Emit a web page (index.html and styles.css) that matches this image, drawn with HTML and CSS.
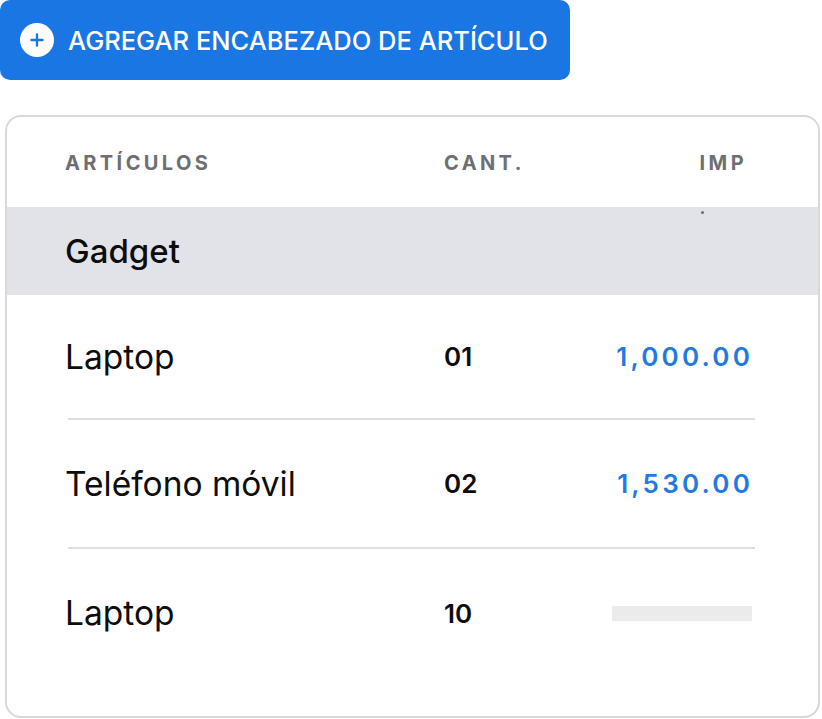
FILE: index.html
```html
<!DOCTYPE html>
<html lang="es">
<head>
    <meta charset="UTF-8">
    <meta name="viewport" content="width=device-width, initial-scale=1.0">
    <title>Artículos</title>
    <link rel="stylesheet" href="styles.css">
</head>
<body>
    <button class="add-btn">
        <span class="plus-icon">
            <svg width="14" height="14" viewBox="0 0 14 14">
                <path d="M7 1.5v11M1.5 7h11" stroke="#1a76e3" stroke-width="2.4" stroke-linecap="round"/>
            </svg>
        </span>
        AGREGAR ENCABEZADO DE ARTÍCULO
    </button>

    <div class="items-card">
        <div class="items-head">
            <span>ARTÍCULOS</span>
            <span>CANT.</span>
            <span class="col-amount">IMP</span>
        </div>

        <div class="group-row">
            <span>Gadget</span>
            <span class="dot"></span>
        </div>

        <!-- filas de artículos -->
        <div class="item-row row-1">
            <span class="item-name">Laptop</span>
            <span class="item-qty">01</span>
            <span class="item-amount">1,000.00</span>
        </div>
        <hr class="divider">
        <div class="item-row row-2">
            <span class="item-name">Teléfono móvil</span>
            <span class="item-qty">02</span>
            <span class="item-amount">1,530.00</span>
        </div>
        <hr class="divider">
        <div class="item-row row-3">
            <span class="item-name">Laptop</span>
            <span class="item-qty">10</span>
            <span class="amount-loading"></span>
        </div>
    </div>
</body>
</html>
```

FILE: styles.css
```css
body {
    font-family: Inter, "Noto Sans", sans-serif;
    background-color: #ffffff;
    margin: 0;
    color: #0d0d0d;
}
.add-btn {
    display: flex;
    align-items: center;
    gap: 14px;
    width: 570px;
    height: 80px;
    padding: 0 0 0 20px;
    border: none;
    border-radius: 10px;
    background-color: #1a76e3;
    color: white;
    font-family: inherit;
    font-size: 25.5px;
    font-weight: 500;
    cursor: pointer;
}
.plus-icon {
    display: flex;
    justify-content: center;
    align-items: center;
    width: 34px;
    height: 34px;
    border-radius: 50%;
    background: white;
}
.items-card {
    margin: 35px 2px 0 5px;
    height: 599px;
    border: 2px solid #d9d9d9;
    border-radius: 16px;
    overflow: hidden;
}
.items-head, .group-row, .item-row {
    display: grid;
    grid-template-columns: 379px 1fr auto;
    align-items: center;
    padding: 0 68px 0 58px;
}
.items-head {
    height: 90px;
    padding-top: 2px;
    box-sizing: border-box;
    color: #6d6f73;
    font-size: 20px;
    font-weight: 700;
    letter-spacing: 3.4px;
}
.items-head .col-amount {
    margin-right: 3px;
}
.group-row {
    height: 88px;
    background-color: #e2e3e8;
    font-size: 33px;
    font-weight: 500;
    position: relative;
}
.dot {
    position: absolute;
    left: 694px;
    top: 4px;
    width: 3px;
    height: 3px;
    border-radius: 50%;
    background: #6d6f73;
}
.row-1 {
    height: 123px;
}
.row-2 {
    height: 127px;
}
.row-3 {
    height: 128px;
}
.item-name {
    font-size: 33.5px;
    font-weight: 400;
}
.item-qty {
    font-size: 26px;
    font-weight: 600;
}
.item-amount {
    margin-right: -3px;
    color: #1f7be2;
    font-size: 26px;
    font-weight: 600;
    letter-spacing: 3.2px;
}
.amount-loading {
    display: block;
    width: 140px;
    height: 15px;
    margin-right: -2px;
    background-color: #ebebeb;
}
.divider {
    margin: 0 63px 0 61px;
    border: none;
    border-top: 2px solid #dedede;
}
```
